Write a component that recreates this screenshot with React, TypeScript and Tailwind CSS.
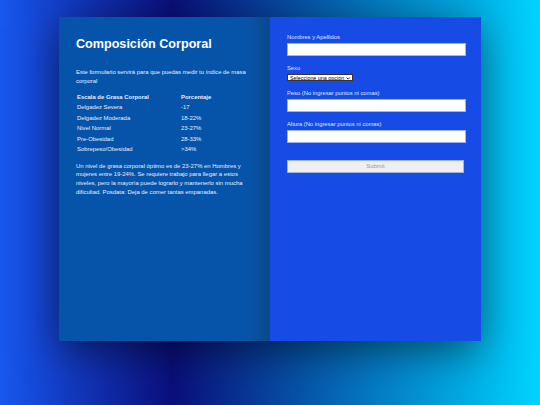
import React from "react";

const rows = [
  ["Delgadez Severa", "-17"],
  ["Delgadez Moderada", "18-22%"],
  ["Nivel Normal", "23-27%"],
  ["Pre-Obesidad", "28-33%"],
  ["Sobrepeso/Obesidad", ">34%"],
];

function Field({ label, top }: { label: string; top: string }) {
  return (
    <div className={top}>
      <label className="block text-[5.8px] leading-[8px] text-[#dfe6ff]">{label}</label>
      <input
        type="text"
        className="mt-[1.5px] block h-[13.7px] w-[179px] border border-[#9fb2f3] bg-white outline-none"
      />
    </div>
  );
}

export default function App() {
  return (
    <div className="flex h-[405px] w-full justify-center bg-[linear-gradient(to_right,#1858f0_0%,#0a0f7c_32%,#00d4ff_100%)] pt-[17px] font-['Liberation_Sans',Arial,sans-serif]">
      <div className="flex h-[324px] w-[422px] shadow-[0_10px_40px_rgba(0,0,0,0.5)]">
        {/* left: info */}
        <section className="w-[211px] bg-[linear-gradient(to_right,#0654a9_90%,#0c4889_100%)] px-[17px] pt-[20px] text-white">
          <h1 className="text-[12.6px] font-bold leading-[15px]">Composición Corporal</h1>
          <p className="mt-[16px] text-[5.92px] leading-[9px] text-[#e8eeff]">
            Este formulario servirá para que puedas medir tu índice de masa corporal
          </p>
          <table className="mt-[6px] border-collapse text-[5.92px] text-[#e8eeff]">
            <thead>
              <tr className="h-[10.5px]">
                <th className="w-[105px] pl-[1px] text-left font-bold">Escala de Grasa Corporal</th>
                <th className="text-left font-bold">Porcentaje</th>
              </tr>
            </thead>
            <tbody>
              {rows.map(([a, b]) => (
                <tr key={a} className="h-[10.5px]">
                  <td className="pl-[1px]">{a}</td>
                  <td>{b}</td>
                </tr>
              ))}
            </tbody>
          </table>
          <p className="mt-[6.5px] text-[5.92px] leading-[8.9px] text-[#e8eeff]">
            Un nivel de grasa corporal óptimo es de 23-27% en Hombres y mujeres entre 19-24%. Se
            requiere trabajo para llegar a estos niveles, pero la mayoría puede lograrlo y
            mantenerlo sin mucha dificultad. Posdata: Deja de comer tantas empanadas.
          </p>
        </section>

        {/* right: form */}
        <section className="w-[211px] bg-[#174be6] pl-[17px] pt-[16px]">
          <Field label="Nombres y Apellidos" top="" />
          <div className="mt-[7.7px]">
            <label className="block text-[5.8px] leading-[8px] text-[#dfe6ff]">Sexo</label>
            <div className="relative mt-[2px] h-[7.4px] w-[66px] border border-[#333] bg-white">
              <select className="block h-full w-full appearance-none bg-transparent pl-[2px] text-[5.4px] leading-[6px] text-black outline-none">
                <option>Seleccione una opción</option>
              </select>
              <svg
                viewBox="0 0 10 10"
                className="pointer-events-none absolute right-[1.5px] top-[1.2px] h-[4.5px] w-[4.5px]"
              >
                <path d="M1.5 3.5 5 7l3.5-3.5" fill="none" stroke="#000" strokeWidth="2" />
              </svg>
            </div>
          </div>
          <Field label="Peso (No ingresar puntos ni comas)" top="mt-[8px]" />
          <Field label="Altura (No ingresar puntos ni comas)" top="mt-[7.7px]" />
          <button
            type="button"
            className="mt-[17px] block h-[12.7px] w-[177px] border border-[#9fb2f3] bg-[#efefef] text-[5.9px] text-[#9a9a9a]"
          >
            Submit
          </button>
        </section>
      </div>
    </div>
  );
}
